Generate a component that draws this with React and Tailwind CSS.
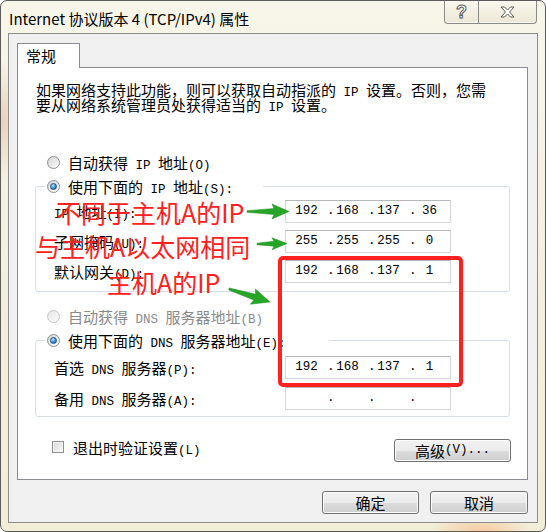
import React from 'react';

// splits a label into CJK runs and half-width latin runs (SimSun-like widths)
const T = ({ s }) =>
    s.split(/([ -~]+)/).map((p, i) =>
        /^[ -~]+$/.test(p) ? (
            <span key={i} className="font-['Liberation_Mono',monospace] text-[12.5px]">{p}</span>
        ) : (
            <React.Fragment key={i}>{p}</React.Fragment>
        )
    );

const Radio = ({ checked, disabled }) => (
    <span
        className={`flex h-[13px] w-[13px] shrink-0 items-center justify-center rounded-full border ${
            disabled
                ? 'border-[#c4c4c4] bg-[linear-gradient(135deg,#e6e6e6,#fbfbfb)]'
                : 'border-[#8e8f8f] bg-[linear-gradient(135deg,#d2d2d2,#ffffff)]'
        }`}
    >
        {checked && (
            <span className="h-[7px] w-[7px] rounded-full border border-[#1b4f86] bg-[radial-gradient(circle_at_35%_30%,#c6ebff_0%,#3d9be6_50%,#0e4f96_100%)]" />
        )}
    </span>
);

const IpBox = ({ parts = [] }) => (
    <div className="flex h-[23px] w-[166px] items-center border border-[#d3d6db] border-t-[#b4b7bc] bg-white font-['Liberation_Mono',monospace] text-[12.5px] leading-[15px] text-black">
        {[0, 1, 2, 3].map((i) => (
            <div key={i} className="flex w-[41px]">
                <span className="w-[8px]">{i > 0 ? '.' : ''}</span>
                <span className="flex-1 text-center">{parts[i] ?? ''}</span>
                <span className="w-[8px]" />
            </div>
        ))}
    </div>
);

const Btn = ({ children, className = '' }) => (
    <button
        className={`flex h-[23px] items-center justify-center rounded-[3px] border border-[#707070] bg-[linear-gradient(#f2f2f2_0%,#ebebeb_50%,#dddddd_51%,#cfcfcf_100%)] text-[15px] leading-[15px] text-black shadow-[inset_0_0_0_1px_#fcfcfc] ${className}`}
    >
        {children}
    </button>
);

const Row = ({ label, parts }) => (
    <div className="flex h-[23px] items-center">
        <div className="h-[15px] w-[249px] whitespace-nowrap pl-[18px]"><T s={label} /></div>
        <IpBox parts={parts} />
    </div>
);

const arrow = (x1, y1, x2, y2, H, hw, s1, s0) => {
    const L = Math.hypot(x2 - x1, y2 - y1);
    const dx = (x2 - x1) / L;
    const dy = (y2 - y1) / L;
    const nx = -dy;
    const ny = dx;
    const p = (t, n) => `${(x1 + dx * t + nx * n).toFixed(1)},${(y1 + dy * t + ny * n).toFixed(1)}`;
    return [p(0, s0), p(L - H, s1), p(L - H - 2, hw), p(L, 0), p(L - H - 2, -hw), p(L - H, -s1), p(0, -s0)].join(' ');
};

export default function App() {
    return (
        <div className="relative h-[532px] w-[546px] overflow-hidden rounded-[7px] border border-[#5b5b5b] bg-[radial-gradient(ellipse_30px_60px_at_0px_120px,#ead0bb_0%,transparent_100%),radial-gradient(ellipse_50px_20px_at_480px_532px,#f6c79c_0%,transparent_100%),linear-gradient(180deg,#f8f6e9_0%,#f3efdc_60%,#f2edd6_100%)] font-['Noto_Sans_CJK_SC',sans-serif] text-black">
            {/* title bar */}
            <div className="flex h-[32px]">
                <div className="flex-1 whitespace-nowrap pl-[8px] pt-[8px] text-[15px] leading-[20px]">
                    Internet 协议版本 4 (TCP/IPv4) 属性
                </div>
                <div className="mr-[8px] flex h-[23px] rounded-b-[4px] border border-t-0 border-[#8a8a8a] bg-[linear-gradient(#faf8ee,#ece8d6)] shadow-[inset_0_-1px_0_#ffffffaa]">
                    <div className="flex w-[34px] items-center justify-center border-r border-[#8a8a8a] font-['Liberation_Sans',sans-serif] text-[18px] font-bold leading-none text-white [-webkit-text-stroke:1px_#5d5d5d]">
                        ?
                    </div>
                    <div className="flex w-[57px] items-center justify-center">
                        <svg width="15" height="12" viewBox="0 0 15 12">
                            <polygon
                                points="1,1 4.5,1 7.5,4 10.5,1 14,1 9.5,6 14,11 10.5,11 7.5,8 4.5,11 1,11 5.5,6"
                                fill="#ffffff"
                                stroke="#555555"
                                strokeWidth="1"
                                strokeLinejoin="round"
                            />
                        </svg>
                    </div>
                </div>
            </div>

            {/* client area */}
            <div className="ml-[7px] flex h-[490px] w-[530px] flex-col border border-[#8d8d8d] bg-[#f0f0f0] text-[15px] leading-[15px]">
                <div className="relative z-10 -mb-px ml-[8px] mt-[9px] h-[25px] w-[63px] border border-b-0 border-[#898c95] bg-white pl-[8px] pt-[4px]">
                    常规
                </div>
                <div className="ml-[8px] flex h-[413px] w-[511px] flex-col border border-[#898c95] bg-white">
                    <div className="whitespace-nowrap pl-[18px] pt-[14px]">
                        <div className="h-[15px]"><T s="如果网络支持此功能，则可以获取自动指派的 IP 设置。否则，您需" /></div>
                        <div className="h-[15px]"><T s="要从网络系统管理员处获得适当的 IP 设置。" /></div>
                    </div>

                    <div className="mt-[40px] flex h-[20px] items-center pl-[29px]">
                        <Radio />
                        <span className="ml-[8px] h-[15px] whitespace-nowrap"><T s="自动获得 IP 地址(O)" /></span>
                    </div>

                    <fieldset className="ml-[17px] mt-[4px] w-[475px] rounded-[3px] border border-[#d5dfe5] pb-[8px]">
                        <legend className="ml-[9px] flex h-[20px] w-[218px] items-center pl-[2px]">
                            <Radio checked />
                            <span className="ml-[8px] h-[15px] whitespace-nowrap"><T s="使用下面的 IP 地址(S):" /></span>
                        </legend>
                        <div className="mt-[4px] flex flex-col gap-[7px]">
                            <Row label="IP 地址(I):" parts={['192', '168', '137', '36']} />
                            <Row label="子网掩码(U):" parts={['255', '255', '255', '0']} />
                            <Row label="默认网关(D):" parts={['192', '168', '137', '1']} />
                        </div>
                    </fieldset>

                    <div className="mt-[14px] flex h-[20px] items-center pl-[29px] text-[#8a8a8a]">
                        <Radio disabled />
                        <span className="ml-[8px] h-[15px] whitespace-nowrap"><T s="自动获得 DNS 服务器地址(B)" /></span>
                    </div>

                    <fieldset className="ml-[17px] mt-[4px] w-[475px] rounded-[3px] border border-[#d5dfe5] pb-[6px]">
                        <legend className="ml-[9px] flex h-[20px] w-[284px] items-center pl-[2px]">
                            <Radio checked />
                            <span className="ml-[8px] h-[15px] whitespace-nowrap"><T s="使用下面的 DNS 服务器地址(E):" /></span>
                        </legend>
                        <div className="mt-[6px] flex flex-col gap-[8px]">
                            <Row label="首选 DNS 服务器(P):" parts={['192', '168', '137', '1']} />
                            <Row label="备用 DNS 服务器(A):" />
                        </div>
                    </fieldset>

                    <div className="mt-[20px] flex items-start pl-[34px] pr-[16px]">
                        <div className="flex h-[20px] flex-1 items-center">
                            <span className="h-[12px] w-[12px] border border-[#8e8f8f] bg-[linear-gradient(135deg,#d6d6d6,#fdfdfd)] shadow-[inset_0_0_0_1px_#f2f2f2]" />
                            <span className="ml-[9px] h-[15px] whitespace-nowrap"><T s="退出时验证设置(L)" /></span>
                        </div>
                        <Btn className="mt-[2px] w-[117px]"><T s="高级(V)..." /></Btn>
                    </div>
                </div>

                <div className="mt-[11px] flex justify-end gap-[11px] pr-[9px]">
                    <Btn className="w-[97px]">确定</Btn>
                    <Btn className="w-[98px]">取消</Btn>
                </div>
            </div>

            {/* annotations drawn over the dialog */}
            <div className="pointer-events-none absolute -left-px -top-px h-[532px] w-[546px]">
                <div className="absolute left-[278px] top-[256px] h-[131px] w-[185px] rounded-[5px] border-[4px] border-[#ff2020]" />
                <div className="absolute left-[56px] top-[200px] whitespace-nowrap text-[25px] leading-[25px] text-[#ff2020]">不同于主机A的IP</div>
                <div className="absolute left-[35px] top-[234px] whitespace-nowrap text-[25px] leading-[25px] text-[#ff2020]">与主机A以太网相同</div>
                <div className="absolute left-[107px] top-[270px] whitespace-nowrap text-[25px] leading-[25px] text-[#ff2020]">主机A的IP</div>
                <svg className="absolute left-0 top-0" width="546" height="532">
                    <polygon points={arrow(247, 211.5, 289, 211.5, 15, 7.5, 3, 0.8)} fill="#26a526" stroke="#1a8a1a" strokeWidth="0.5" />
                    <polygon points={arrow(257, 244, 287, 243.5, 13, 6, 2.5, 0.8)} fill="#26a526" stroke="#1a8a1a" strokeWidth="0.5" />
                    <polygon points={arrow(229, 289, 270, 302, 16, 8, 3, 1)} fill="#26a526" stroke="#1a8a1a" strokeWidth="0.5" />
                </svg>
            </div>
        </div>
    );
}
